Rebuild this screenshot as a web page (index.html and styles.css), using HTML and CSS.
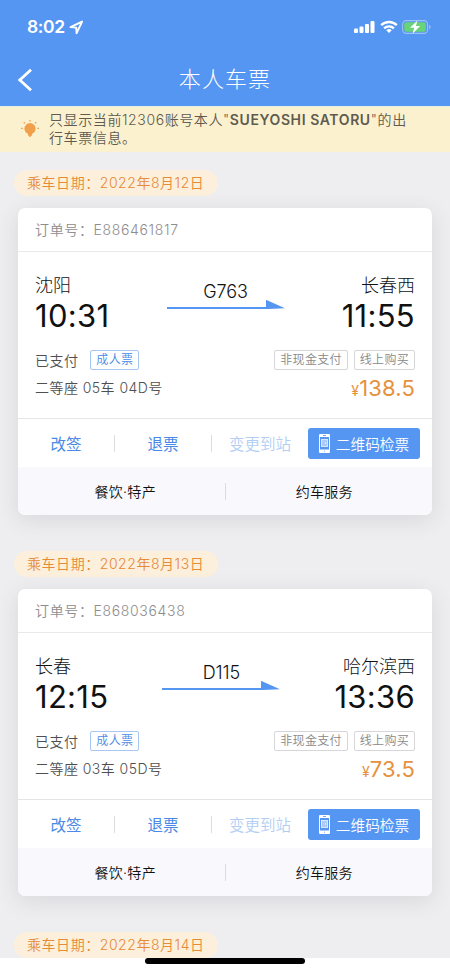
FILE: index.html
```
<!DOCTYPE html>
<html lang="zh-CN">
<head>
<meta charset="utf-8">
<meta name="viewport" content="width=device-width, initial-scale=1">
<title>本人车票</title>
<link rel="stylesheet" href="styles.css">
</head>
<body>
<div class="app">
  <header class="header">
    <div class="status">
      <div class="status-time"><span class="clock">8:02</span>
        <svg class="location" width="15" height="15" viewBox="0 0 15 15"><path d="M1.500 7.100 13.100 1.600 7.600 13.200 7.200 7.600Z" fill="none" stroke="#fff" stroke-width="1.900" stroke-linejoin="round"/></svg>
      </div>
      <div class="status-icons">
        <svg width="21" height="14" viewBox="0 0 21 14" fill="#fff"><rect x="0" y="8.500" width="4" height="4.500" rx="1"/><rect x="5.500" y="6.500" width="4" height="6.500" rx="1"/><rect x="11" y="4" width="4" height="9" rx="1"/><rect x="16.500" y="1" width="4" height="12" rx="1"/></svg>
        <svg class="wifi" width="18" height="14" viewBox="0 0 18 14" fill="none" stroke="#fff" stroke-width="2.400"><path d="M1.200 5.200a11.200 11.200 0 0 1 15.600 0M4.100 8.300a7.100 7.100 0 0 1 9.800 0"/><path d="M9 13 6.300 10.300a3.900 3.900 0 0 1 5.400 0Z" fill="#fff" stroke="none"/></svg>
        <svg class="battery" width="30" height="14" viewBox="0 0 30 14"><rect x=".6" y=".6" width="25" height="12.800" rx="3.800" fill="none" stroke="#9bc2f3" stroke-width="1.100"/><rect x="2.300" y="2.200" width="21.500" height="9.600" rx="2.300" fill="#68d477"/><path d="M27.200 4.800c2 .8 2 3.600 0 4.400Z" fill="#9bc2f3"/><path d="M15.500.5 8 7.800h4.200L10.500 13.700 18.200 6h-4.300Z" fill="#fff"/></svg>
      </div>
    </div>
    <div class="nav">
      <svg class="back" width="16" height="24" viewBox="0 0 16 24"><path d="M14 1.700 2.800 12 14 22.300" fill="none" stroke="#fff" stroke-width="2.800"/></svg>
      <h1 class="title">本人车票</h1>
    </div>
  </header>
  <div class="notice">
    <svg class="bulb" width="18" height="18" viewBox="0 0 18 18"><circle cx="9" cy="8.600" r="5.600" fill="#f0a04b"/><path d="M6.700 13h4.600l-.6 2.500L9 17.200l-1.700-1.700Z" fill="#f0a04b"/><path d="M9 0v1.600M2.700 2.200l1.200 1.200M15.300 2.200l-1.200 1.200M0 8.400h1.700M16.300 8.400H18" stroke="#f0a04b" stroke-width="1.300"/></svg>
    <p class="notice-text"><span class="notice-line">只显示当前12306账号本人"<b>SUEYOSHI SATORU</b>"的出</span><span class="notice-line">行车票信息。</span></p>
  </div>
  <main class="list">
    <section class="trip">
      <div class="date">乘车日期：2022年8月12日</div>
      <article class="card">
        <div class="order">订单号：E886461817</div>
        <div class="body">
          <div class="route">
            <div class="stop"><div class="station">沈阳</div><div class="time">10:31</div></div>
            <div class="train"><div class="train-no">G763</div><svg width="120" height="10" viewBox="0 0 120 10"><path d="M1 7h99V-.2L119 8.300l-17 .7H1Z" fill="#5696f3"/></svg></div>
            <div class="stop end"><div class="station">长春西</div><div class="time">11:55</div></div>
          </div>
          <div class="row paid"><span class="text">已支付</span><span class="tag blue">成人票</span><span class="tag push">非现金支付</span><span class="tag">线上购买</span></div>
          <div class="row seat"><span class="text">二等座 05车 04D号</span><span class="price"><small>¥</small>138.5</span></div>
        </div>
        <div class="actions">
          <span class="action">改签</span><i class="rule"></i><span class="action">退票</span><i class="rule"></i><span class="action off">变更到站</span>
          <span class="qr"><svg width="11" height="19" viewBox="0 0 11 19"><rect width="11" height="19" rx="1" fill="#fff"/><path d="M1 3h9v12.500H1Z" fill="#5696f3"/><path d="M2 5h7v8H2Z" fill="#d8e7fd"/><path d="M3 7h5M3 9h3M7 9h1M3 11h5" stroke="#6c9ff0" stroke-width=".8"/><path d="M4 1.500h3M5 17.200h1" stroke="#5696f3" stroke-width=".8"/></svg>二维码检票</span>
        </div>
        <div class="services"><span>餐饮·特产</span><i class="rule"></i><span>约车服务</span></div>
      </article>
    </section>
    <section class="trip">
      <div class="date">乘车日期：2022年8月13日</div>
      <article class="card">
        <div class="order">订单号：E868036438</div>
        <div class="body">
          <div class="route">
            <div class="stop"><div class="station">长春</div><div class="time">12:15</div></div>
            <div class="train"><div class="train-no">D115</div><svg width="120" height="10" viewBox="0 0 120 10"><path d="M1 7h99V-.2L119 8.300l-17 .7H1Z" fill="#5696f3"/></svg></div>
            <div class="stop end"><div class="station">哈尔滨西</div><div class="time">13:36</div></div>
          </div>
          <div class="row paid"><span class="text">已支付</span><span class="tag blue">成人票</span><span class="tag push">非现金支付</span><span class="tag">线上购买</span></div>
          <div class="row seat"><span class="text">二等座 03车 05D号</span><span class="price"><small>¥</small>73.5</span></div>
        </div>
        <div class="actions">
          <span class="action">改签</span><i class="rule"></i><span class="action">退票</span><i class="rule"></i><span class="action off">变更到站</span>
          <span class="qr"><svg width="11" height="19" viewBox="0 0 11 19"><rect width="11" height="19" rx="1" fill="#fff"/><path d="M1 3h9v12.500H1Z" fill="#5696f3"/><path d="M2 5h7v8H2Z" fill="#d8e7fd"/><path d="M3 7h5M3 9h3M7 9h1M3 11h5" stroke="#6c9ff0" stroke-width=".8"/><path d="M4 1.500h3M5 17.200h1" stroke="#5696f3" stroke-width=".8"/></svg>二维码检票</span>
        </div>
        <div class="services"><span>餐饮·特产</span><i class="rule"></i><span>约车服务</span></div>
      </article>
    </section>
    <section class="trip">
      <div class="date">乘车日期：2022年8月14日</div>
    </section>
  </main>
  <footer class="home"><div class="home-bar"></div></footer>
</div>
</body>
</html>
```
FILE: styles.css
```
* { box-sizing: border-box; }
body {
  margin: 0;
  background: #fff;
  font-family: Inter, "Noto Sans CJK SC", sans-serif;
  font-weight: 350;
  color: #111;
}
.app { width: 450px; height: 974px; overflow: hidden; display: flex; flex-direction: column; }
.app svg { display: block; flex: none; }
.header { height: 106px; flex: none; background: #5696f3; color: #fff; }
.status { height: 54px; display: flex; justify-content: space-between; padding: 0 18px 0 27px; }
.status-time { display: flex; padding-top: 17px; }
.clock { font-size: 17.500px; font-weight: 600; line-height: 20px; width: 38px; white-space: nowrap; letter-spacing: -.4px; }
.location { margin: 3px 0 0 4px; }
.status-icons { display: flex; padding-top: 20px; }
.wifi { margin-left: 5px; }
.battery { margin-left: 4px; }
.nav { height: 52px; display: grid; grid-template-columns: 60px 1fr 60px; align-items: center; }
.back { margin: 0 0 1px 17px; }
.title { margin: 0; text-align: center; font-size: 22px; font-weight: 300; letter-spacing: 1.100px; line-height: 48px; padding-bottom: 2px; }
.notice { height: 46px; flex: none; display: flex; background: #fbf1cf; border-top: 1px solid #e7efe5; color: #5f5b50; }
.bulb { margin: 13px 0 0 21px; }
.notice-text { margin: 4px 0 0 10px; font-size: 14px; white-space: nowrap; letter-spacing: .6px; }
.notice-line { display: block; height: 18px; line-height: 18px; }
.notice-text b { font-weight: 600; }
.list { height: 806px; flex: none; overflow: hidden; background: #eeeef0; padding-top: 18px; }
.trip { height: 381px; }
.date { width: 204px; height: 26px; margin-left: 14px; padding-left: 13px; border-radius: 13px; background: #fcefdc; color: #e58a35; font-size: 14px; line-height: 26px; letter-spacing: .55px; white-space: nowrap; }
.card { width: 414px; height: 307px; margin: 12px 0 0 18px; border-radius: 7px; background: #fff; box-shadow: 0 5px 22px rgba(60, 60, 85, .12); overflow: hidden; }
.order { height: 44px; border-bottom: 1px solid #e9e9eb; padding-left: 17px; line-height: 44px; font-size: 14px; letter-spacing: .65px; color: #8d8d8f; }
.body { height: 167px; border-bottom: 1px solid #e5e5e7; padding: 22px 17px 0; }
.route { height: 74px; display: flex; justify-content: space-between; }
.station { height: 24px; line-height: 24px; font-size: 18px; font-weight: 300; }
.time { height: 36px; line-height: 36px; font-size: 31px; font-weight: 400; letter-spacing: .3px; white-space: nowrap; }
.end { text-align: right; }
.train { display: flex; flex-direction: column; align-items: center; padding-top: 8px; }
.train-no { height: 18px; line-height: 20px; font-size: 18px; letter-spacing: -.1px; }
.row { display: flex; align-items: center; color: #4f4f51; }
.text { font-size: 14px; letter-spacing: .45px; white-space: nowrap; }
.paid { height: 24px; }
.tag { height: 20px; border: 1px solid #d6d6d8; border-radius: 2px; padding: 0 5px; margin-left: 6px; font-size: 12px; line-height: 18px; letter-spacing: .3px; color: #888; white-space: nowrap; }
.tag.blue { margin-left: 12px; border-color: #a9c7f3; color: #4a8ae6; }
.tag.push { margin-left: auto; }
.seat { height: 31px; justify-content: space-between; }
.seat .text { padding-bottom: 2px; }
.price { color: #e6913d; font-size: 22px; font-weight: 400; white-space: nowrap; letter-spacing: .15px; }
.price small { font-size: 14px; }
.actions { height: 48px; display: flex; align-items: center; padding-right: 12px; color: #4a8ae6; font-size: 15.500px; }
.action { width: 96px; text-align: center; font-weight: 400; white-space: nowrap; }
.action.off { color: #b2cef4; font-weight: 350; }
.rule { width: 1px; height: 17px; background: #dcdce0; }
.qr { width: 112px; height: 31px; margin-left: auto; display: flex; align-items: center; justify-content: center; gap: 6px; border-radius: 3px; background: #5696f3; color: #fff; font-size: 14.700px; white-space: nowrap; }
.services { height: 48px; display: flex; align-items: center; background: #f8f8fd; font-size: 14px; letter-spacing: .3px; }
.services span { width: 207px; text-align: center; padding-left: 8px; }
.services .rule + span { padding: 0 9px 0 0; }
.home { height: 16px; background: #fff; display: flex; justify-content: center; }
.home-bar { width: 160px; height: 6px; border-radius: 3px; background: #000; }
```
